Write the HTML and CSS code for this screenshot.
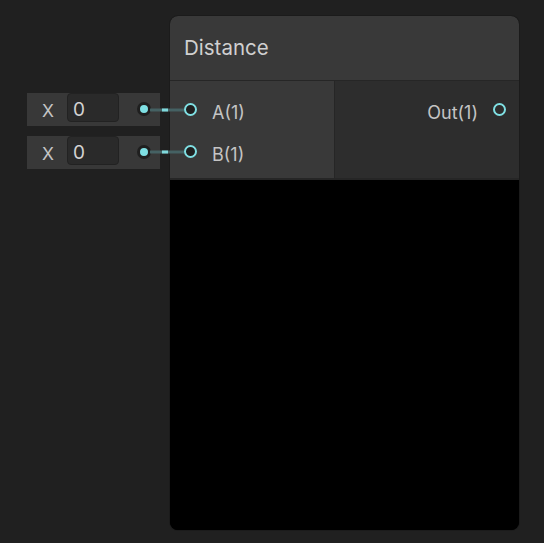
FILE: index.html
```html
<!DOCTYPE html>
<html>
<head>
<meta charset="utf-8">
<link rel="stylesheet" href="styles.css">
</head>
<body>
<div class="canvas">
  <div class="inputs">
    <div class="field-box">
      <span class="axis">X</span>
      <span class="value">0</span>
      <span class="dot"></span>
    </div>
    <div class="field-box">
      <span class="axis">X</span>
      <span class="value">0</span>
      <span class="dot"></span>
    </div>
  </div>

  <div class="node">
    <div class="title">Distance</div>
    <div class="ports">
      <div class="col in">
        <div class="port"><span class="socket"></span><span class="label">A(1)</span></div>
        <div class="port"><span class="socket"></span><span class="label">B(1)</span></div>
      </div>
      <div class="col out">
        <div class="port"><span class="label">Out(1)</span><span class="socket"></span></div>
      </div>
    </div>
    <div class="preview"></div>
  </div>

  <svg class="wires" width="544" height="543" viewBox="0 0 544 543">
    <g stroke-width="3">
      <line x1="150" y1="110" x2="184" y2="110" stroke="#456163"/>
      <line x1="162" y1="110" x2="168" y2="110" stroke="#7fd9dc"/>
      <line x1="150" y1="152" x2="184" y2="152" stroke="#456163"/>
      <line x1="162" y1="152" x2="168" y2="152" stroke="#7fd9dc"/>
    </g>
  </svg>
</div>
</body>
</html>
```

FILE: styles.css
```css
html, body {
  margin: 0;
  padding: 0;
  background: #202020;
}
body {
  font-family: Inter, "Noto Sans", "Liberation Sans", sans-serif;
  color: #c4c4c4;
}
.canvas {
  position: relative;
  width: 544px;
  height: 543px;
  overflow: hidden;
  background: #202020;
}
.inputs {
  position: absolute;
  left: 27px;
  top: 93px;
  display: flex;
  flex-direction: column;
  gap: 10px;
}
.field-box {
  width: 133px;
  height: 33px;
  background: #383838;
  display: flex;
  align-items: flex-start;
  box-sizing: border-box;
}
.axis {
  width: 40px;
  height: 29px;
  line-height: 35px;
  font-size: 17.5px;
  text-align: center;
  padding-left: 2px;
  box-sizing: border-box;
}
.value {
  width: 52px;
  height: 29px;
  box-sizing: border-box;
  background: #2a2a2a;
  border: 1px solid #222;
  border-radius: 4px;
  font-size: 19px;
  line-height: 31px;
  padding-left: 5px;
  color: #d2d2d2;
}
.dot {
  margin-left: 18px;
  margin-top: 9px;
  width: 8px;
  height: 8px;
  border-radius: 50%;
  background: #7fe0e4;
  border: 3px solid #1f1f1f;
}
.wires {
  position: absolute;
  left: 0;
  top: 0;
  z-index: 2;
  pointer-events: none;
}
.node {
  position: absolute;
  left: 170px;
  top: 16px;
  width: 349px;
  height: 514px;
  border-radius: 8px;
  overflow: hidden;
  background: #000;
  display: flex;
  flex-direction: column;
  box-shadow: 0 0 0 1px #1b1b1b;
  z-index: 1;
}
.title {
  background: #393939;
  border-bottom: 1px solid #262626;
  font-size: 20.5px;
  line-height: 64px;
  padding-left: 14px;
  color: #d0d0d0;
  box-sizing: border-box;
  height: 65px;
}
.ports {
  display: flex;
  height: 99px;
  border-bottom: 2px solid #262626;
  box-sizing: border-box;
}
.col {
  padding-top: 7px;
  box-sizing: border-box;
}
.col.in {
  width: 165px;
  background: #393939;
  border-right: 1px solid #262626;
}
.col.out {
  flex: 1;
  background: #2d2d2d;
}
.port {
  height: 42px;
  display: flex;
  align-items: center;
  font-size: 18px;
}
.in .port {
  padding-left: 14px;
  gap: 15px;
}
.out .port {
  justify-content: flex-end;
  padding-right: 13px;
  gap: 15px;
}
.socket {
  width: 13px;
  height: 13px;
  box-sizing: border-box;
  border-radius: 50%;
  border: 2px solid #7fdfe3;
  background: #202020;
}
.out .socket {
  background: transparent;
}
.label {
  color: #c4c4c4;
  position: relative;
  top: 3px;
}
.preview {
  flex: 1;
  background: #000;
}
```
